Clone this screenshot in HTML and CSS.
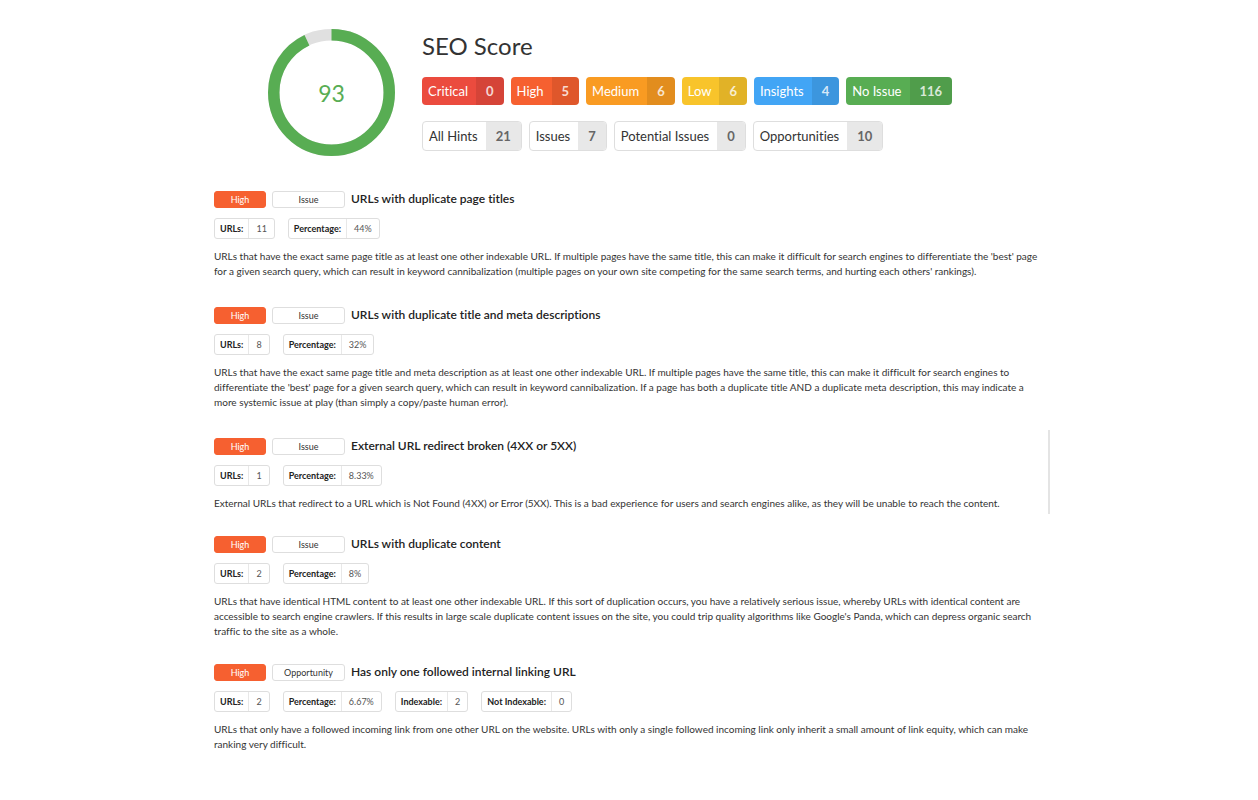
FILE: index.html
```html
<!DOCTYPE html>
<html lang="en">
<head>
<meta charset="utf-8">
<meta name="viewport" content="width=device-width, initial-scale=1">
<title>SEO Score</title>
<link rel="stylesheet" href="styles.css">
</head>
<body>
<main class="report">
  <header class="summary">
    <div class="gauge">
      <svg class="gauge-ring" viewBox="0 0 126 126" aria-hidden="true">
        <circle cx="63" cy="63" r="57.3" fill="none" stroke="#e0e0e0" stroke-width="11.4"/>
        <circle cx="63" cy="63" r="57.3" fill="none" stroke="#58ad53" stroke-width="11.4" pathLength="100" stroke-dasharray="93 100" transform="rotate(-90 63 63)"/>
      </svg>
      <span class="gauge-value">93</span>
    </div>
    <div class="summary-body">
      <h1 class="summary-title">SEO Score</h1>
      <div class="pills">
        <button class="pill pill-critical" type="button"><span class="pill-label">Critical</span><span class="pill-count">0</span></button>
        <button class="pill pill-high" type="button"><span class="pill-label">High</span><span class="pill-count">5</span></button>
        <button class="pill pill-medium" type="button"><span class="pill-label">Medium</span><span class="pill-count">6</span></button>
        <button class="pill pill-low" type="button"><span class="pill-label">Low</span><span class="pill-count">6</span></button>
        <button class="pill pill-insights" type="button"><span class="pill-label">Insights</span><span class="pill-count">4</span></button>
        <button class="pill pill-none" type="button"><span class="pill-label">No Issue</span><span class="pill-count">116</span></button>
      </div>
      <div class="pills">
        <button class="pill pill-plain" type="button"><span class="pill-label">All Hints</span><span class="pill-count">21</span></button>
        <button class="pill pill-plain" type="button"><span class="pill-label">Issues</span><span class="pill-count">7</span></button>
        <button class="pill pill-plain" type="button"><span class="pill-label">Potential Issues</span><span class="pill-count">0</span></button>
        <button class="pill pill-plain" type="button"><span class="pill-label">Opportunities</span><span class="pill-count">10</span></button>
      </div>
    </div>
  </header>

  <section class="issue">
    <div class="issue-head"><span class="tag tag-high">High</span><span class="tag tag-type">Issue</span><h2 class="issue-title">URLs with duplicate page titles</h2></div>
    <dl class="stats">
      <div class="stat"><dt>URLs:</dt><dd>11</dd></div>
      <div class="stat"><dt>Percentage:</dt><dd>44%</dd></div>
    </dl>
    <p class="issue-text">URLs that have the exact same page title as at least one other indexable URL. If multiple pages have the same title, this can make it difficult for search engines to differentiate the 'best' page for a given search query, which can result in keyword cannibalization (multiple pages on your own site competing for the same search terms, and hurting each others' rankings).</p>
  </section>

  <section class="issue">
    <div class="issue-head"><span class="tag tag-high">High</span><span class="tag tag-type">Issue</span><h2 class="issue-title">URLs with duplicate title and meta descriptions</h2></div>
    <dl class="stats">
      <div class="stat"><dt>URLs:</dt><dd>8</dd></div>
      <div class="stat"><dt>Percentage:</dt><dd>32%</dd></div>
    </dl>
    <p class="issue-text">URLs that have the exact same page title and meta description as at least one other indexable URL. If multiple pages have the same title, this can make it difficult for search engines to differentiate the 'best' page for a given search query, which can result in keyword cannibalization. If a page has both a duplicate title AND a duplicate meta description, this may indicate a more systemic issue at play (than simply a copy/paste human error).</p>
  </section>

  <section class="issue issue-close issue-ruled">
    <div class="issue-head"><span class="tag tag-high">High</span><span class="tag tag-type">Issue</span><h2 class="issue-title">External URL redirect broken (4XX or 5XX)</h2></div>
    <dl class="stats">
      <div class="stat"><dt>URLs:</dt><dd>1</dd></div>
      <div class="stat"><dt>Percentage:</dt><dd>8.33%</dd></div>
    </dl>
    <p class="issue-text">External URLs that redirect to a URL which is Not Found (4XX) or Error (5XX). This is a bad experience for users and search engines alike, as they will be unable to reach the content.</p>
  </section>

  <section class="issue issue-close">
    <div class="issue-head"><span class="tag tag-high">High</span><span class="tag tag-type">Issue</span><h2 class="issue-title">URLs with duplicate content</h2></div>
    <dl class="stats">
      <div class="stat"><dt>URLs:</dt><dd>2</dd></div>
      <div class="stat"><dt>Percentage:</dt><dd>8%</dd></div>
    </dl>
    <p class="issue-text">URLs that have identical HTML content to at least one other indexable URL. If this sort of duplication occurs, you have a relatively serious issue, whereby URLs with identical content are accessible to search engine crawlers. If this results in large scale duplicate content issues on the site, you could trip quality algorithms like Google's Panda, which can depress organic search traffic to the site as a whole.</p>
  </section>

  <section class="issue">
    <div class="issue-head"><span class="tag tag-high">High</span><span class="tag tag-type">Opportunity</span><h2 class="issue-title">Has only one followed internal linking URL</h2></div>
    <dl class="stats">
      <div class="stat"><dt>URLs:</dt><dd>2</dd></div>
      <div class="stat"><dt>Percentage:</dt><dd>6.67%</dd></div>
      <div class="stat"><dt>Indexable:</dt><dd>2</dd></div>
      <div class="stat"><dt>Not Indexable:</dt><dd>0</dd></div>
    </dl>
    <p class="issue-text">URLs that only have a followed incoming link from one other URL on the website. URLs with only a single followed incoming link only inherit a small amount of link equity, which can make ranking very difficult.</p>
  </section>
</main>
</body>
</html>
```

FILE: styles.css
```css
* { box-sizing: border-box; }

body {
  margin: 0;
  background: #fff;
  color: #333;
  font-family: Lato, "Liberation Sans", sans-serif;
  font-variant-ligatures: none;
}

.report {
  max-width: 864px;
  margin: 0 auto;
  padding: 29px 16px 40px 17px;
}

/* Score summary */
.summary {
  display: flex;
  gap: 27px;
  margin-bottom: 35px;
  padding-left: 54px;
}

.gauge {
  display: grid;
  flex: none;
  place-items: center;
  width: 127px;
  height: 127px;
}

.gauge-ring,
.gauge-value { grid-area: 1 / 1; }

.gauge-ring { width: 127px; }

.gauge-value {
  color: #58ad53;
  font-size: 23px;
  line-height: 28px;
}

.summary-title {
  margin: 2px 0 16px;
  color: #333;
  font-size: 24px;
  font-weight: 400;
  line-height: 30px;
}

.pills {
  display: flex;
  flex-wrap: wrap;
  gap: 7px;
}

.pills + .pills { margin-top: 16px; }

.pill {
  display: flex;
  overflow: hidden;
  padding: 0;
  border: 0;
  border-radius: 4px;
  color: #fff;
  font: 400 13px/28px Lato, "Liberation Sans", sans-serif;
  font-variant-ligatures: none;
  cursor: pointer;
}

.pill-label { padding: 0 8px 0 6px; }

.pill-count {
  padding: 0 10px;
  background: rgba(0, 0, 0, 0.09);
  color: rgba(255, 255, 255, 0.8);
  font-weight: 700;
}

.pill-critical { background: #eb4b3e; }
.pill-high { background: #f66030; }
.pill-medium { background: #f99b22; }
.pill-low { background: #f8c42b; }
.pill-insights { background: #42a5f5; }
.pill-none { background: #58ad53; }

.pill-plain {
  border: 1px solid #dedede;
  background: #fff;
  color: #333;
}

.pill-plain .pill-count {
  background: #e8e8e8;
  color: #666;
}

/* Issue list */
.issue { margin-bottom: 28px; }

.issue-close { margin-bottom: 25px; }

.issue-ruled { position: relative; }

.issue-ruled::after {
  content: "";
  position: absolute;
  top: -8px;
  right: -5px;
  bottom: -3px;
  width: 2px;
  background: #e4e4e4;
}

.issue-head {
  display: flex;
  align-items: flex-start;
  gap: 6px;
  margin-bottom: 10px;
}

.tag {
  flex: none;
  border: 1px solid #dedede;
  border-radius: 3px;
  font-size: 9px;
  line-height: 15px;
  text-align: center;
}

.tag-high {
  width: 52px;
  border-color: #f66030;
  background: #f66030;
  color: #fff;
}

.tag-type { width: 73px; }

.issue-title {
  margin: 0;
  color: #222;
  font-size: 12px;
  font-weight: 600;
  line-height: 15px;
}

.stats {
  display: flex;
  flex-wrap: wrap;
  gap: 13px;
  margin: 0 0 10px;
}

.stat {
  display: flex;
  border: 1px solid #dedede;
  border-radius: 3px;
  font-size: 9px;
  line-height: 19px;
}

.stat dt {
  padding: 0 5px;
  color: #222;
  font-weight: 700;
}

.stat dd {
  margin: 0;
  padding: 0 7px;
  border-left: 1px solid #e8e8e8;
  color: #555;
}

.issue-text {
  margin: 0;
  font-size: 10px;
  line-height: 15px;
}
```
